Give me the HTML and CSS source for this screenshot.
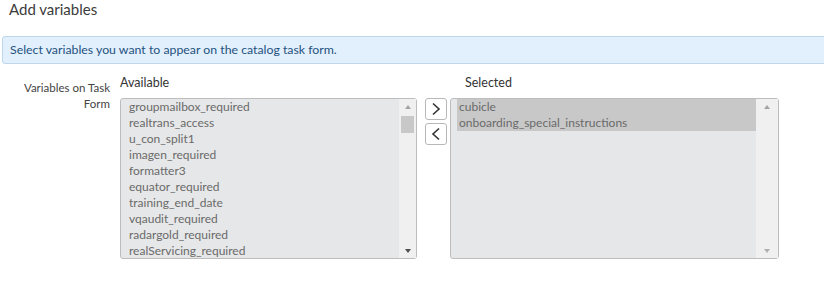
FILE: index.html
```html
<!DOCTYPE html>
<html lang="en">
<head>
    <meta charset="UTF-8">
    <title>Add variables</title>
    <link rel="stylesheet" href="styles.css">
</head>
<body>
    <h2 class="title">Add variables</h2>
    <div class="info">Select variables you want to appear on the catalog task form.</div>

    <div class="field">
        <div class="field-label">Variables on Task Form</div>

        <div class="slush">
            <div class="col col-avail">
                <div class="col-head">Available</div>
                <div class="listbox">
                    <div class="options">
                        <div class="opt">groupmailbox_required</div>
                        <div class="opt">realtrans_access</div>
                        <div class="opt">u_con_split1</div>
                        <div class="opt">imagen_required</div>
                        <div class="opt">formatter3</div>
                        <div class="opt">equator_required</div>
                        <div class="opt">training_end_date</div>
                        <div class="opt">vqaudit_required</div>
                        <div class="opt">radargold_required</div>
                        <div class="opt">realServicing_required</div>
                    </div>
                    <div class="scroll">
                        <span class="arr up"></span>
                        <span class="thumb"></span>
                        <span class="arr down dark"></span>
                    </div>
                </div>
            </div>

            <div class="moves">
                <button class="mv">
                    <svg width="10" height="14" viewBox="0 0 10 14"><path d="M2 1.5 L8 7 L2 12.5" fill="none" stroke="#333" stroke-width="1.6"/></svg>
                </button>
                <button class="mv">
                    <svg width="10" height="14" viewBox="0 0 10 14"><path d="M8 1.5 L2 7 L8 12.5" fill="none" stroke="#333" stroke-width="1.6"/></svg>
                </button>
            </div>

            <div class="col col-sel">
                <div class="col-head">Selected</div>
                <div class="listbox">
                    <div class="options">
                        <div class="opt picked">cubicle</div>
                        <div class="opt picked">onboarding_special_instructions</div>
                    </div>
                    <div class="scroll">
                        <span class="arr up"></span>
                        <span class="spacer"></span>
                        <span class="arr down"></span>
                    </div>
                </div>
            </div>
        </div>
    </div>
</body>
</html>
```

FILE: styles.css
```css
*{
    margin: 0;
    padding: 0;
    box-sizing: border-box;
}
body{
    background-color: #fff;
    font-family: 'Lato', sans-serif;
    color: #444;
    overflow: hidden;
}
.title{
    font-weight: normal;
    font-size: 15px;
    color: #3c3c3c;
    padding: 0 0 0 9px;
    line-height: 18px;
}
.info{
    margin: 18px -10px 0 2px;
    height: 28px;
    line-height: 26px;
    padding-left: 7px;
    background-color: #e2effd;
    border: 1px solid #bed7ea;
    border-radius: 3px;
    color: #24527d;
    font-size: 12.3px;
}
.field{
    display: flex;
    margin-top: 11px;
}
.field-label{
    width: 110px;
    padding: 5px 0 0 22px;
    text-align: right;
    font-size: 11.5px;
    line-height: 16px;
    color: #444;
}
.slush{
    display: flex;
    margin-left: 10px;
}
.col-head{
    font-size: 12.5px;
    line-height: 16px;
    height: 23px;
    color: #333;
}
.col-sel .col-head{
    padding-left: 15px;
}
.listbox{
    display: flex;
    height: 161px;
    background-color: #e6e7e8;
    border: 1px solid #bdbdbd;
    border-radius: 3px;
    padding-left: 6px;
}
.col-avail .listbox{
    width: 297px;
}
.col-sel .listbox{
    width: 329px;
}
.options{
    flex: 1;
}
.opt{
    font-size: 12px;
    line-height: 16px;
    padding-left: 2px;
    color: #6a6a6a;
    white-space: nowrap;
}
.picked{
    background-color: #c8c8c8;
}
.scroll{
    width: 17px;
    background-color: #f0f0f0;
    display: flex;
    flex-direction: column;
    align-items: center;
    padding: 6px 0 5px;
}
.col-sel .scroll{
    width: 22px;
}
.arr{
    width: 0;
    height: 0;
    border-left: 3.5px solid transparent;
    border-right: 3.5px solid transparent;
}
.arr.up{
    border-bottom: 4px solid #a3a3a3;
}
.arr.down{
    border-top: 4px solid #b0b0b0;
    margin-top: auto;
}
.arr.dark{
    border-top-color: #505050;
}
.thumb{
    width: 13px;
    height: 17px;
    margin-top: 7px;
    background-color: #c8c8c8;
}
.moves{
    display: flex;
    flex-direction: column;
    gap: 3px;
    padding-top: 23px;
    margin: 0 3px 0 8px;
}
.mv{
    width: 22px;
    height: 22px;
    background-color: #fff;
    border: 1px solid #b8b8b8;
    border-radius: 3px;
    display: flex;
    align-items: center;
    justify-content: center;
}
```
